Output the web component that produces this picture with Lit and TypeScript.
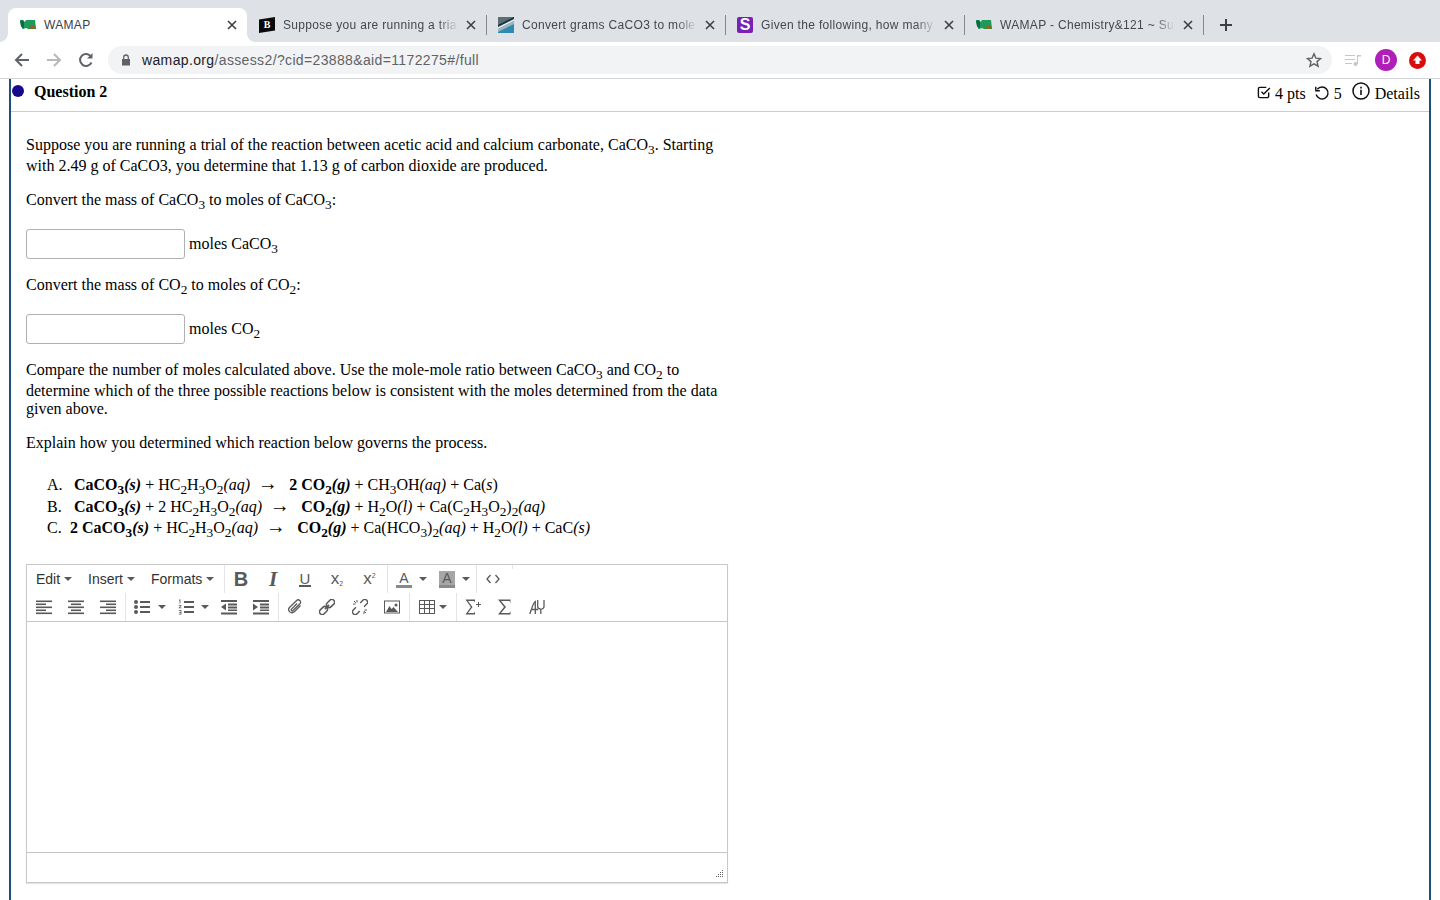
import { LitElement, html, css, svg } from "lit";
import { customElement } from "lit/decorators.js";

const wamapIcon = html`<svg class="fav" viewBox="0 0 16 16"><path d="M0 3.500 L3 3 L5 5 L6 3 L15 3 L16 12 L8 12 L6 11 L3 12 L1 9 Z" fill="#1d9a5c"/><path d="M0 3.500 L3 3 L4 6 L4 10 L3 12 L1 9Z" fill="#0c6b3e"/><path d="M9 9 L15 8 L16 12 L9 12Z" fill="#5f7a2a"/><path d="M11 9 h2 v2 h-2z" fill="#b5532a"/></svg>`;
const bIcon = html`<span class="fav favb"><svg viewBox="0 0 16 16"><path d="M0 2.500 L16 0 V13.500 L0 16 Z" fill="#0b0b0b"/></svg><span>B</span></span>`;
const convIcon = html`<svg class="fav" viewBox="0 0 16 16"><rect width="16" height="16" fill="#2b8bb0"/><path d="M0 0H16L0 9Z" fill="#5d6d76"/><path d="M0 9 L16 1 V4 L0 12 Z" fill="#e8e8e8"/><path d="M0 8 L16 0 V2 L0 10 Z" fill="#12323f"/><path d="M0 12 L16 4 V7 L0 15 Z" fill="#9fb4bc"/></svg>`;
const sIcon = html`<span class="fav favs">S</span>`;

const tabs = [
  { t: "WAMAP", i: wamapIcon, active: true },
  { t: "Suppose you are running a trial of the", i: bIcon },
  { t: "Convert grams CaCO3 to moles - Conv", i: convIcon },
  { t: "Given the following, how many moles", i: sIcon },
  { t: "WAMAP - Chemistry&121 ~ Summer 20", i: wamapIcon },
];

const ic = (body: unknown, w = 16, h = 16) =>
  html`<svg class="ti" width=${w} height=${h} viewBox="0 0 16 16" fill="#595959">${body}</svg>`;

const bars = (rows: [number, number][]) =>
  svg`${rows.map((r, i) => svg`<rect x=${r[0]} y=${1.5 + i * 3} width=${r[1]} height="1.6"/>`)}`;

const I = {
  bold: html`<span class="glyph b">B</span>`,
  italic: html`<span class="glyph i">I</span>`,
  under: html`<span class="glyph u">U</span>`,
  sub: html`<span class="glyph x">x<small>2</small></span>`,
  sup: html`<span class="glyph x">x<sup>2</sup></span>`,
  fore: html`<span class="glyph a">A</span>`,
  back: html`<span class="glyph a bk">A</span>`,
  code: ic(svg`<path d="M5.500 4 2 8l3.500 4M10.500 4 14 8l-3.500 4" fill="none" stroke="#595959" stroke-width="1.300"/>`),
  left: ic(bars([[0, 16], [0, 10], [0, 16], [0, 10], [0, 16]])),
  center: ic(bars([[0, 16], [3, 10], [0, 16], [3, 10], [0, 16]])),
  right: ic(bars([[0, 16], [6, 10], [0, 16], [6, 10], [0, 16]])),
  bull: ic(svg`<circle cx="2" cy="3" r="2"/><circle cx="2" cy="8" r="2"/><circle cx="2" cy="13" r="2"/><rect x="6" y="2" width="10" height="2"/><rect x="6" y="7" width="10" height="2"/><rect x="6" y="12" width="10" height="2"/>`),
  num: ic(svg`<path d="M1 .5h1.400v4H1.600V1.500H1zM.8 6h2.600v.8L1.800 8.500h1.700v.8H.8v-.8l1.700-1.600v-.1H.8zM.8 11h2.600v4.500H.8v-.8h1.800v-1H1.200v-.7h1.400v-1.200H.8z"/><rect x="6" y="2" width="10" height="2"/><rect x="6" y="7" width="10" height="2"/><rect x="6" y="12" width="10" height="2"/>`),
  outdent: ic(svg`<rect y="1" width="16" height="2"/><rect x="7" y="4.500" width="9" height="2"/><rect x="7" y="7.500" width="9" height="2"/><rect x="7" y="10.500" width="9" height="1.500"/><rect y="13.500" width="16" height="2"/><path d="M5 4.500v7L0 8z"/>`),
  indent: ic(svg`<rect y="1" width="16" height="2"/><rect x="7" y="4.500" width="9" height="2"/><rect x="7" y="7.500" width="9" height="2"/><rect x="7" y="10.500" width="9" height="1.500"/><rect y="13.500" width="16" height="2"/><path d="M0 4.500v7L5 8z"/>`),
  clip: ic(svg`<path d="M13.500 6.500 7.300 12.800a3.200 3.200 0 0 1-4.600-4.500L9.600 1.500a2.300 2.300 0 0 1 3.300 3.200L6 11.500a1 1 0 0 1-1.500-1.400L10 4.500" fill="none" stroke="#595959" stroke-width="1.300"/>`),
  link: ic(svg`<g transform="rotate(-45 8 8)" fill="none" stroke="#595959" stroke-width="1.500"><rect x="-1.500" y="5.300" width="9" height="5.400" rx="2.700"/><rect x="8.500" y="5.300" width="9" height="5.400" rx="2.700"/><path d="M5 8h6"/></g>`),
  unlink: ic(svg`<g transform="rotate(-45 8 8)" fill="none" stroke="#595959" stroke-width="1.400"><path d="M5 5.300H1.200a2.700 2.700 0 0 0 0 5.400H5"/><path d="M11 5.300h3.800a2.700 2.700 0 0 1 0 5.400H11"/></g><path d="M1 5h2.500M5 1v2.500M2 2l1.800 1.800M12 15v-2.500M15 11h-2.500M12.200 12.200 14 14" fill="none" stroke="#595959" stroke-width="1"/>`),
  image: ic(svg`<path fill-rule="evenodd" d="M0 1.500h16v13H0zM1 2.500v11h14v-11z"/><path d="M2 13l3.500-6 2 3 2-2 4.500 5zM12 4.500a1.500 1.500 0 1 1 0 3 1.500 1.500 0 0 1 0-3z"/>`),
  table: ic(svg`<path fill-rule="evenodd" d="M0 1h16v14H0zM1 2v3h4V2zm5 0v3h4V2zm5 0v3h4V2zM1 6v3h4V6zm5 0v3h4V6zm5 0v3h4V6zM1 10v4h4v-4zm5 0v4h4v-4zm5 0v4h4v-4z"/>`),
  sigmaPlus: ic(svg`<path d="M.5 .5h9.500v3L9 2H3l4.500 6L3 14h6l1-1.500v3H.5l5.300-7.500z"/><path d="M11 5h5v1h-5zM13 3h1v5h-1z"/>`),
  sigma: ic(svg`<path d="M1 .5h12.500v3.500L12.500 2H4l5 6-5 6h8.500l1-2v3.500H1l6-7.500z"/>`),
  sym: ic(svg`<path d="M.8 15C3 9 4 4 6.300 2.500V15M2.800 10.500H9M8.700 1v6.500c0 3.500 6.300 3.500 6.300 0V1M11.800 10V15" fill="none" stroke="#595959" stroke-width="1.300"/>`),
};

const caret = html`<i class="caret"></i>`;
const btn = (i: unknown, cls = "") => html`<div class="btn ${cls}">${i}</div>`;
const drop = (i: unknown, cls = "") => html`<div class="btn drop ${cls}">${i}${caret}</div>`;

@customElement("app-root")
export class AppRoot extends LitElement {
  static styles = css`
    :host { display: block; width: 1440px; height: 900px; overflow: hidden; background: #fff; font-family: "Liberation Serif", serif; font-size: 16px; color: #000; }
    .tabstrip { height: 42px; background: #dee1e6; display: flex; padding: 8px 0 0 8px; box-sizing: border-box; font-family: "Liberation Sans", sans-serif; }
    .tab { width: 239px; height: 34px; display: flex; align-items: center; padding: 0 8px 0 12px; box-sizing: border-box; position: relative; color: #45484c; font-size: 12px; letter-spacing: 0.32px; }
    .tab.active { background: #fff; border-radius: 8px 8px 0 0; color: #3c4043; }
    .tab.active::before, .tab.active::after { content: ""; position: absolute; bottom: 0; width: 8px; height: 8px; }
    .tab.active::before { left: -8px; background: radial-gradient(circle at 0 0, transparent 7.500px, #fff 8px); }
    .tab.active::after { right: -8px; background: radial-gradient(circle at 100% 0, transparent 7.500px, #fff 8px); }
    .tab.sep::after { content: ""; position: absolute; right: -1px; top: 7px; height: 20px; width: 1px; background: #84878c; }
    .fav { width: 16px; height: 16px; flex: none; margin-right: 8px; display: block; }
    .favb { position: relative; }
    .favb svg { display: block; width: 16px; height: 16px; }
    .favb span { position: absolute; inset: 0; color: #fff; font: 900 10px/16px "Liberation Serif", serif; text-align: center; letter-spacing: 0; }
    .favs { background: #7a1fb8; border-radius: 2px; color: #fff; font: 700 16px/16px "Liberation Sans", sans-serif; text-align: center; letter-spacing: 0; }
    .title { flex: 1; min-width: 0; white-space: nowrap; overflow: hidden; mask-image: linear-gradient(to left, transparent 0, #000 20px); -webkit-mask-image: linear-gradient(to left, transparent 0, #000 20px); }
    .active .title { mask-image: none; -webkit-mask-image: none; }
    .close { width: 14px; height: 14px; flex: none; margin-left: 6px; }
    .plus { margin: 9px 0 0 15px; width: 16px; height: 16px; }
    .bar { height: 37px; background: #fff; display: flex; align-items: center; box-sizing: border-box; border-bottom: 1px solid #d2d4d8; padding: 0 14px; }
    .bar > svg { flex: none; }
    .nav { display: flex; gap: 16px; width: 94px; flex: none; }
    .omni { flex: 1; height: 28px; background: #f1f3f4; border-radius: 14px; display: flex; align-items: center; padding: 0 10px 0 13px; font: 14px "Liberation Sans", sans-serif; letter-spacing: 0.36px; color: #5f6368; margin-right: 13px; }
    .omni b { font-weight: 400; color: #202124; }
    .omni .lock { margin-right: 11px; }
    .omni .star { margin-left: auto; }
    .ext { display: flex; align-items: center; flex: none; width: 81px; }
    .avatar { width: 22px; height: 22px; border-radius: 50%; background: #b01fb8; color: #fff; font: 12px/22px "Liberation Sans", sans-serif; text-align: center; margin: 0 12px 0 14px; flex: none; }
    .page { margin: 0 9px; border-left: 2px solid #1f4e79; border-right: 2px solid #1f4e79; height: 821px; display: flex; flex-direction: column; }
    .qhead { height: 32px; border-bottom: 1px solid #c9ccd0; display: flex; align-items: flex-start; flex: none; }
    .dot { width: 12px; height: 12px; border-radius: 50%; background: #16088f; margin: 6px 10px 0 1px; flex: none; }
    .qtitle { font-weight: 700; margin-top: 4px; }
    .meta { margin-left: auto; display: flex; align-items: flex-start; margin-right: 9px; margin-top: 6px; }
    .meta svg { flex: none; }
    .meta span { line-height: 18px; }
    .i-check { margin: 0 4px 0 2px; }
    .i-undo { margin: 0 4px 0 8px; }
    .i-info { margin: -3px 5px 0 10px; }
    .body { padding: 24px 15px 0; flex: 1; }
    .txt { width: 702px; }
    p { margin: 0 0 16px; }
    sub { line-height: 13.800px; }
    .ans { display: flex; align-items: center; gap: 4px; padding-top: 1px; margin: 0 0 17px; width: 702px; }
    .ans span { padding-top: 3px; }
    .input { width: 159px; height: 30px; box-sizing: border-box; border: 1px solid #b0b0b0; border-radius: 3px; background: #fff; flex: none; }
    .rx { margin: 22.200px 0 25.800px 21px; display: flex; flex-direction: column; white-space: nowrap; }
    .rx > div { display: flex; height: 21.500px; line-height: 21.500px; }
    .rx .l { width: 27px; flex: none; }
    .rx .e { display: block; }
    .rx .e.n { margin-left: -4px; }
    .rx sub { line-height: 0; }
    .ar { margin: 0 11.500px 0 7.500px; font-size: 20px; line-height: 0; font-weight: 400; }
    .ed { width: 702px; height: 319px; box-sizing: border-box; border: 1px solid #c8c8c8; box-shadow: 0 1px 1px rgba(0,0,0,.1); display: flex; flex-direction: column; font-family: "Liberation Sans", sans-serif; }
    .tools { height: 56px; border-bottom: 1px solid #c5c5c5; flex: none; }
    .row { display: flex; height: 28px; padding-left: 1px; }
    .grp { display: flex; height: 28px; padding-right: 1px; border-right: 1px solid #e2e4e7; flex: none; }
    .grp.last { border-right: 0; }
    .stub { width: 1px; height: 4px; background: #e2e4e7; margin-left: 2px; flex: none; }
    .btn { width: 32px; height: 28px; display: flex; align-items: center; justify-content: center; color: #595959; flex: none; box-sizing: border-box; }
    .btn.drop { gap: 8px; justify-content: flex-start; padding-left: 8px; }
    .btn.w33 { width: 33px; }
    .btn.w43 { width: 43px; }
    .btn.w44 { width: 44px; }
    .btn.w45 { width: 45px; }
    .btn.gap7 { gap: 7px; }
    .btn.gap4 { gap: 4px; }
    .btn.pad9 { padding-left: 9px; }
    .menu { font-size: 14px; color: #333; justify-content: flex-start; padding-left: 8px; gap: 4px; }
    .menu.m1 { width: 52px; }
    .menu.m2 { width: 63px; }
    .menu.m3 { width: 80px; }
    .caret { display: block; width: 0; height: 0; border: 4px solid transparent; border-top-color: #595959; border-bottom: 0; flex: none; }
    .glyph { font-family: "Liberation Sans", sans-serif; line-height: 16px; width: 16px; text-align: center; color: #595959; display: block; position: relative; box-sizing: border-box; }
    .glyph.b { font-weight: 700; font-size: 20px; }
    .glyph.i { font-style: italic; font-weight: 700; font-family: "Liberation Serif", serif; font-size: 21px; }
    .glyph.u { font-size: 15px; line-height: 13px; border-bottom: 2px solid #595959; width: 12px; height: 15px; }
    .glyph.x { font-size: 17px; white-space: nowrap; }
    .glyph.x small { font-size: 7px; vertical-align: -2px; line-height: 0; }
    .glyph.x sup { font-size: 7px; vertical-align: 6px; line-height: 0; }
    .glyph.a { font-size: 14px; height: 17px; line-height: 15px; border-bottom: 3px solid #8a8a8a; }
    .glyph.a.bk { background: #a6a6a6; }
    .area { flex: 1; }
    .status { height: 30px; border-top: 1px solid #c5c5c5; position: relative; flex: none; box-sizing: border-box; }
    .grip { position: absolute; right: 3px; bottom: 3px; width: 9px; height: 9px; }
  `;

  render() {
    const x = html`<svg class="close" viewBox="0 0 14 14"><path d="M3 3l8 8M11 3l-8 8" stroke="#3c4043" stroke-width="1.600"/></svg>`;
    return html`
      <div class="tabstrip">
        ${tabs.map((t, i) => html`<div class="tab ${t.active ? "active" : ""} ${i > 0 ? "sep" : ""}">${t.i}<span class="title">${t.t}</span>${x}</div>`)}
        <svg class="plus" viewBox="0 0 16 16"><path d="M8 2v12M2 8h12" stroke="#3c4043" stroke-width="2"/></svg>
      </div>
      <div class="bar">
        <div class="nav">
          <svg width="16" height="16" viewBox="0 0 16 16"><path d="M15 8H2M8 2 2 8l6 6" fill="none" stroke="#5f6368" stroke-width="2"/></svg>
          <svg width="16" height="16" viewBox="0 0 16 16"><path d="M1 8h13M8 2l6 6-6 6" fill="none" stroke="#b6b8bb" stroke-width="2"/></svg>
          <svg width="16" height="16" viewBox="0 0 16 16"><path d="M13.500 10.500A6 6 0 1 1 13 4.500" fill="none" stroke="#5f6368" stroke-width="2"/><path d="M14.500 1v5.500H9z" fill="#5f6368"/></svg>
        </div>
        <div class="omni">
          <svg class="lock" width="10" height="12" viewBox="0 0 10 12"><path d="M1 5h8v6.500H1z" fill="#5f6368"/><path d="M2.700 5V3.300a2.300 2.300 0 0 1 4.600 0V5" fill="none" stroke="#5f6368" stroke-width="1.300"/></svg>
          <span><b>wamap.org</b>/assess2/?cid=23888&amp;aid=1172275#/full</span>
          <svg class="star" width="16" height="16" viewBox="0 0 16 16"><path d="M8 1.800l1.900 4.300 4.700.4-3.600 3.100 1.100 4.600L8 11.800l-4.100 2.400L5 9.600 1.400 6.500l4.700-.4z" fill="none" stroke="#5f6368" stroke-width="1.400"/></svg>
        </div>
        <div class="ext">
          <svg width="16" height="14" viewBox="0 0 16 14"><path d="M0 2h10v1H0zM0 6h10v1H0zM0 10h7v1H0zM12 2h4v1.500h-3V11h-1z" fill="#c4c6c9"/><circle cx="10.500" cy="11" r="2" fill="#c4c6c9"/></svg>
          <div class="avatar">D</div>
          <svg width="17" height="17" viewBox="0 0 17 17"><circle cx="8.500" cy="8.500" r="8.500" fill="#d90c0c"/><path d="M8.500 3.500 13 8.500h-2.500V12h-4V8.500H4z" fill="#fff"/></svg>
        </div>
      </div>
      <div class="page">
        <div class="qhead">
          <div class="dot"></div>
          <div class="qtitle">Question 2</div>
          <div class="meta">
            <svg class="i-check" width="14" height="15" viewBox="0 0 15 15"><path d="M12.500 7.500v4a1.500 1.500 0 0 1-1.500 1.500H3a1.500 1.500 0 0 1-1.500-1.500V3.500A1.500 1.500 0 0 1 3 2h7" fill="none" stroke="#111" stroke-width="1.500"/><path d="M4.800 6.800l2.400 2.400L13.800 2.600" fill="none" stroke="#111" stroke-width="1.500"/></svg>
            <span>4 pts</span>
            <svg class="i-undo" width="16" height="16" viewBox="0 0 16 16"><path d="M3.300 4.300A6 6 0 1 1 2.200 9.500" fill="none" stroke="#111" stroke-width="1.400"/><path d="M1.800 1.800v4h4" fill="none" stroke="#111" stroke-width="1.400"/></svg>
            <span>5</span>
            <svg class="i-info" width="18" height="18" viewBox="0 0 18 18"><circle cx="9" cy="9" r="8" fill="none" stroke="#111" stroke-width="1.500"/><path d="M8.200 7.800h1.600V13H8.200zM8.200 4.800h1.600v1.600H8.200z" fill="#111"/></svg>
            <span>Details</span>
          </div>
        </div>
        <div class="body">
          <p class="txt">Suppose you are running a trial of the reaction between acetic acid and calcium carbonate, CaCO<sub>3</sub>. Starting with 2.49 g of CaCO3, you determine that 1.13 g of carbon dioxide are produced.</p>
          <p class="txt">Convert the mass of CaCO<sub>3</sub> to moles of CaCO<sub>3</sub>:</p>
          <div class="ans"><div class="input"></div><span>moles CaCO<sub>3</sub></span></div>
          <p class="txt">Convert the mass of CO<sub>2</sub> to moles of CO<sub>2</sub>:</p>
          <div class="ans"><div class="input"></div><span>moles CO<sub>2</sub></span></div>
          <p class="txt">Compare the number of moles calculated above. Use the mole-mole ratio between CaCO<sub>3</sub> and CO<sub>2</sub> to determine which of the three possible reactions below is consistent with the moles determined from the data given above.</p>
          <p class="txt">Explain how you determined which reaction below governs the process.</p>
          <div class="rx">
            <div><span class="l">A.</span><span class="e"><b>CaCO<sub>3</sub><i>(s)</i></b> + HC<sub>2</sub>H<sub>3</sub>O<sub>2</sub><i>(aq)</i><span class="ar">→</span><b>2 CO<sub>2</sub><i>(g)</i></b> + CH<sub>3</sub>OH<i>(aq)</i> + Ca(<i>s</i>)</span></div>
            <div><span class="l">B.</span><span class="e"><b>CaCO<sub>3</sub><i>(s)</i></b> + 2 HC<sub>2</sub>H<sub>3</sub>O<sub>2</sub><i>(aq)</i><span class="ar">→</span><b>CO<sub>2</sub><i>(g)</i></b> + H<sub>2</sub>O<i>(l)</i> + Ca(C<sub>2</sub>H<sub>3</sub>O<sub>2</sub>)<sub>2</sub><i>(aq)</i></span></div>
            <div><span class="l">C.</span><span class="e n"><b>2 CaCO<sub>3</sub><i>(s)</i></b> + HC<sub>2</sub>H<sub>3</sub>O<sub>2</sub><i>(aq)</i><span class="ar">→</span><b>CO<sub>2</sub><i>(g)</i></b> + Ca(HCO<sub>3</sub>)<sub>2</sub><i>(aq)</i> + H<sub>2</sub>O<i>(l)</i> + CaC<i>(s)</i></span></div>
          </div>
          <div class="ed">
            <div class="tools">
              <div class="row">
                <div class="grp">
                  <div class="btn menu m1">Edit${caret}</div>
                  <div class="btn menu m2">Insert${caret}</div>
                  <div class="btn menu m3">Formats${caret}</div>
                </div>
                <div class="grp">${btn(I.bold)}${btn(I.italic)}${btn(I.under)}${btn(I.sub)}${btn(I.sup, "w33")}</div>
                <div class="grp">${drop(I.fore, "w43 gap7")}${drop(I.back, "w44 gap7")}</div>
                <div class="grp last">${btn(I.code)}</div>
                <div class="stub"></div>
              </div>
              <div class="row">
                <div class="grp">${btn(I.left)}${btn(I.center)}${btn(I.right)}</div>
                <div class="grp">${drop(I.bull, "w44")}${drop(I.num, "w43 gap7")}${btn(I.outdent)}${btn(I.indent)}</div>
                <div class="grp">${btn(I.clip)}${btn(I.link)}${btn(I.unlink, "w33")}${btn(I.image)}</div>
                <div class="grp">${drop(I.table, "w45 pad9 gap4")}</div>
                <div class="grp last">${btn(I.sigmaPlus)}${btn(I.sigma)}${btn(I.sym)}</div>
              </div>
            </div>
            <div class="area"></div>
            <div class="status">
              <svg class="grip" viewBox="0 0 9 9" fill="#666"><rect x="7" y="0" width="1" height="1"/><rect x="5" y="2" width="1" height="1"/><rect x="7" y="2" width="1" height="1"/><rect x="3" y="4" width="1" height="1"/><rect x="5" y="4" width="1" height="1"/><rect x="7" y="4" width="1" height="1"/><rect x="1" y="6" width="1" height="1"/><rect x="3" y="6" width="1" height="1"/><rect x="5" y="6" width="1" height="1"/><rect x="7" y="6" width="1" height="1"/></svg>
            </div>
          </div>
        </div>
      </div>
    `;
  }
}
